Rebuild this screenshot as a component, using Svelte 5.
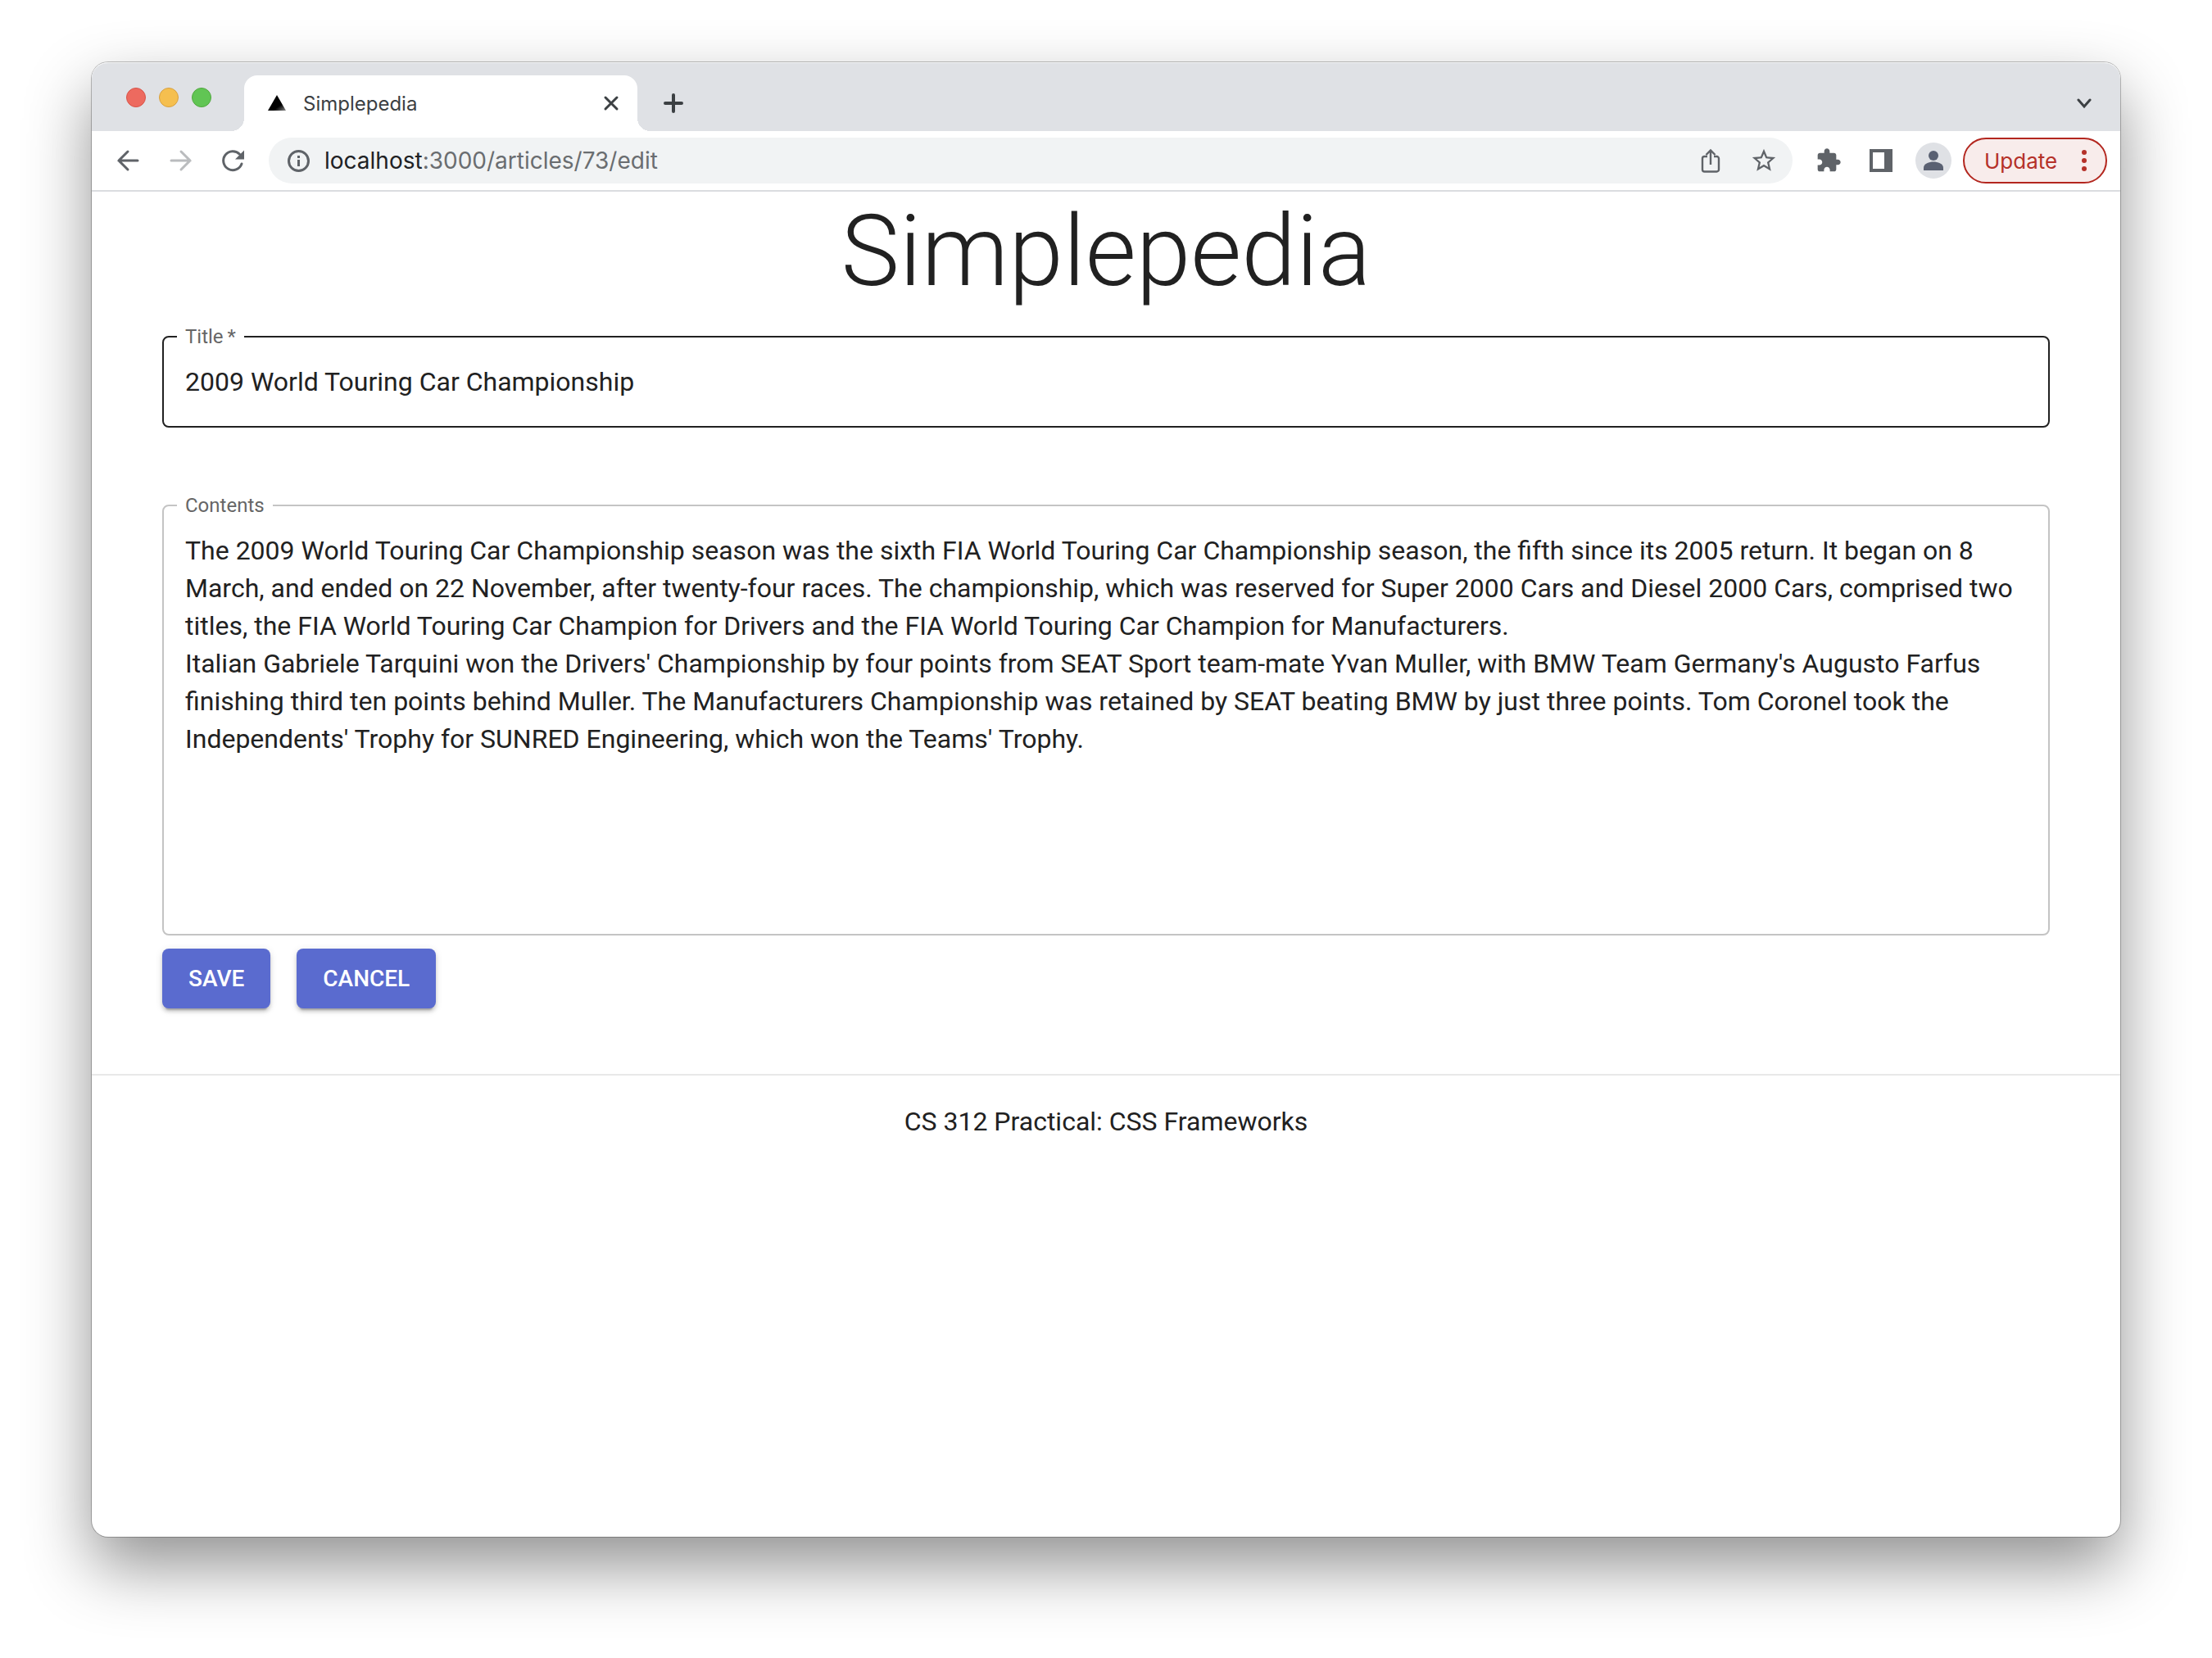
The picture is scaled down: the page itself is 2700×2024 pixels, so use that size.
<script lang="ts">
  const lights = ["close", "minimize", "zoom"];

  let title = $state("2009 World Touring Car Championship");
  let contents = $state(
    "The 2009 World Touring Car Championship season was the sixth FIA World Touring Car Championship season, the fifth since its 2005 return. It began on 8 March, and ended on 22 November, after twenty-four races. The championship, which was reserved for Super 2000 Cars and Diesel 2000 Cars, comprised two titles, the FIA World Touring Car Champion for Drivers and the FIA World Touring Car Champion for Manufacturers.\n" +
      "Italian Gabriele Tarquini won the Drivers' Championship by four points from SEAT Sport team-mate Yvan Muller, with BMW Team Germany's Augusto Farfus finishing third ten points behind Muller. The Manufacturers Championship was retained by SEAT beating BMW by just three points. Tom Coronel took the Independents' Trophy for SUNRED Engineering, which won the Teams' Trophy."
  );
</script>

<div class="desktop">
  <div class="window">
    <header class="tab-strip">
      <div class="lights">
        {#each lights as light (light)}
          <button type="button" class="light {light}" aria-label={light}></button>
        {/each}
      </div>
      <div class="tab">
        <svg class="favicon" viewBox="0 0 24 24" aria-hidden="true">
          <defs>
            <linearGradient id="tri" x1="0.5" y1="0.4" x2="1" y2="1">
              <stop offset="0.4" stop-color="#000" />
              <stop offset="1" stop-color="#888" />
            </linearGradient>
          </defs>
          <path d="M12 2 23 21H1z" fill="url(#tri)" />
        </svg>
        <span class="tab-title">Simplepedia</span>
        <button type="button" class="icon-btn" aria-label="Close tab">
          <svg width="24" height="24" viewBox="0 0 24 24">
            <path d="M5 5 19 19M19 5 5 19" fill="none" stroke="#3c4043" stroke-width="3" stroke-linecap="round" />
          </svg>
        </button>
      </div>
      <button type="button" class="icon-btn new-tab" aria-label="New tab">
        <svg width="24" height="24" viewBox="0 0 24 24">
          <path d="M12 2V22M2 12H22" fill="none" stroke="#3c4043" stroke-width="4" stroke-linecap="round" />
        </svg>
      </button>
      <button type="button" class="icon-btn tab-search" aria-label="Search tabs">
        <svg width="24" height="24" viewBox="0 0 24 24">
          <path d="m5 8 7 8 7-8" fill="none" stroke="#3c4043" stroke-width="3" stroke-linecap="round" />
        </svg>
      </button>
    </header>

    <nav class="toolbar">
      <div class="nav-buttons">
        <button type="button" class="icon-btn" aria-label="Back">
          <svg width="32" height="32" viewBox="0 0 32 32">
            <path d="M28 16H5M16 5 5 16 16 27" fill="none" stroke="#5f6368" stroke-width="3" stroke-linecap="round" />
          </svg>
        </button>
        <button type="button" class="icon-btn" aria-label="Forward">
          <svg width="32" height="32" viewBox="0 0 32 32">
            <path d="M5 16H28M17 5 28 16 17 27" fill="none" stroke="#babcbe" stroke-width="3" stroke-linecap="round" />
          </svg>
        </button>
        <button type="button" class="icon-btn" aria-label="Reload">
          <svg width="32" height="32" viewBox="0 0 32 32">
            <path d="M27 20A11.500 11.500 0 1 1 24.500 8.200" fill="none" stroke="#5f6368" stroke-width="3" stroke-linecap="round" />
            <path d="M30 3.500V14.500H19z" fill="#5f6368" />
          </svg>
        </button>
      </div>

      <div class="omnibox">
        <button type="button" class="icon-btn" aria-label="Site information">
          <svg width="28" height="28" viewBox="0 0 28 28">
            <circle cx="14.500" cy="14.500" r="12" fill="none" stroke="#5f6368" stroke-width="3" />
            <path d="M13 13h3V21h-3zM13 8h3v3h-3z" fill="#5f6368" />
          </svg>
        </button>
        <div class="url" role="textbox" tabindex="0" aria-label="Address">
          <span class="host">localhost</span>:3000/articles/73/edit
        </div>
        <button type="button" class="icon-btn" aria-label="Share">
          <svg width="32" height="32" viewBox="0 0 32 32">
            <path d="M12 11H8.500a2.500 2.500 0 0 0-2.500 2.500V27a2.500 2.500 0 0 0 2.500 2.500H23.500a2.500 2.500 0 0 0 2.500-2.500V13.500a2.500 2.500 0 0 0-2.500-2.500H20M16 21V4M10.500 9 16 3.500 21.500 9" fill="none" stroke="#5f6368" stroke-width="2.400" />
          </svg>
        </button>
        <button type="button" class="icon-btn" aria-label="Bookmark this page">
          <svg width="34" height="34" viewBox="0 0 24 24">
            <path fill="#5f6368" d="m22 9.240-7.190-.620L12 2 9.190 8.630 2 9.240l5.460 4.730L5.820 21 12 17.270 18.180 21l-1.630-7.030L22 9.240zM12 15.400l-3.760 2.270 1-4.280-3.320-2.880 4.380-.380L12 6.100l1.710 4.040 4.380.380-3.320 2.880 1 4.280L12 15.400z" />
          </svg>
        </button>
      </div>

      <div class="extras">
        <button type="button" class="icon-btn" aria-label="Extensions">
          <svg width="32" height="32" viewBox="0 0 24 24">
            <path fill="#5f6368" d="M20.500 11H19V7c0-1.100-.900-2-2-2h-4V3.500C13 2.120 11.880 1 10.500 1S8 2.120 8 3.500V5H4c-1.100 0-1.990.900-1.990 2v3.800H3.500c1.490 0 2.700 1.210 2.700 2.700s-1.210 2.700-2.700 2.700H2V20c0 1.100.900 2 2 2h3.800v-1.500c0-1.490 1.210-2.700 2.700-2.700 1.490 0 2.700 1.210 2.700 2.700V22H17c1.100 0 2-.900 2-2v-4h1.500c1.380 0 2.500-1.120 2.500-2.500S21.880 11 20.500 11z" />
          </svg>
        </button>
        <button type="button" class="icon-btn" aria-label="Side panel">
          <svg width="32" height="32" viewBox="0 0 32 32">
            <path fill="#5f6368" fill-rule="evenodd" d="M2 2H30V30H2zM6 6V26H20V6z" />
          </svg>
        </button>
        <button type="button" class="icon-btn avatar" aria-label="Profile">
          <svg width="44" height="44" viewBox="0 0 44 44">
            <circle cx="22" cy="16" r="6" fill="#5a6172" />
            <path d="M10 34V30.500C10 26 17 23.500 22 23.500S34 26 34 30.500V34z" fill="#5a6172" />
          </svg>
        </button>
      </div>
      <button type="button" class="update">
        Update
        <svg width="8" height="28" viewBox="0 0 8 28" aria-hidden="true">
          <circle cx="4" cy="4" r="3" />
          <circle cx="4" cy="14" r="3" />
          <circle cx="4" cy="24" r="3" />
        </svg>
      </button>
    </nav>

    <main>
      <h1>Simplepedia</h1>
      <form onsubmit={(e) => e.preventDefault()}>
        <fieldset class="hovered">
          <legend><label for="title">Title&thinsp;*</label></legend>
          <input id="title" type="text" bind:value={title} required />
        </fieldset>
        <fieldset>
          <legend><label for="contents">Contents</label></legend>
          <textarea id="contents" rows="10" spellcheck="false" bind:value={contents}></textarea>
        </fieldset>
        <div class="actions">
          <button type="submit" class="contained">Save</button>
          <button type="button" class="contained">Cancel</button>
        </div>
      </form>
    </main>
    <footer>CS 312 Practical: CSS Frameworks</footer>
  </div>
</div>

<style>
  :global(body) {
    background: #fff;
  }

  .desktop {
    box-sizing: border-box;
    min-height: 100vh;
    display: flex;
    padding: 76px 112px 148px;
    overflow: hidden;
    font-family: Roboto, sans-serif;
    color: #212121;
  }

  .window {
    flex: 1;
    min-width: 0;
    display: flex;
    flex-direction: column;
    background: #fff;
    border-radius: 20px;
    box-shadow: 0 0 0 1px rgba(0, 0, 0, 0.25), 0 36px 80px rgba(0, 0, 0, 0.43);
  }

  button {
    font-family: inherit;
    cursor: pointer;
  }

  .icon-btn {
    display: flex;
    padding: 0;
    border: 0;
    background: none;
  }

  /* tab strip */
  .tab-strip {
    display: flex;
    align-items: center;
    height: 84px;
    background: #dfe1e5;
    border-radius: 20px 20px 0 0;
    box-shadow: inset 0 1px #f4f5f6;
  }

  .lights {
    display: flex;
    gap: 16px;
    padding: 2px 40px 0 42px;
  }

  .light {
    box-sizing: border-box;
    width: 24px;
    height: 24px;
    padding: 0;
    border: 1px solid #d85449;
    border-radius: 50%;
    background: #ed6a5f;
  }
  .light.minimize {
    border-color: #d8a040;
    background: #f5bf4f;
  }
  .light.zoom {
    border-color: #51a83f;
    background: #61c554;
  }

  .tab {
    position: relative;
    align-self: flex-end;
    box-sizing: border-box;
    display: flex;
    align-items: center;
    width: 480px;
    height: 68px;
    padding: 0 20px 0 28px;
    background: #fff;
    border-radius: 16px 16px 0 0;
  }
  /* flared bottom corners */
  .tab::before,
  .tab::after {
    content: "";
    position: absolute;
    bottom: 0;
    width: 16px;
    height: 16px;
  }
  .tab::before {
    right: 100%;
    background: radial-gradient(circle at 0 0, transparent 16px, #fff 16px);
  }
  .tab::after {
    left: 100%;
    background: radial-gradient(circle at 100% 0, transparent 16px, #fff 16px);
  }

  .favicon {
    width: 24px;
    height: 24px;
  }

  .tab-title {
    flex: 1;
    padding-left: 20px;
    font: 24px Inter, sans-serif;
    color: #3c4043;
  }

  .new-tab {
    margin: 16px 0 0 32px;
  }

  .tab-search {
    margin: 16px 32px 0 auto;
  }

  /* toolbar */
  .toolbar {
    display: flex;
    align-items: center;
    height: 72px;
    padding: 0 16px 0 28px;
    border-bottom: 2px solid #dadce0;
  }

  .nav-buttons {
    display: flex;
    gap: 32px;
    margin-right: 28px;
  }

  .omnibox {
    flex: 1;
    display: flex;
    align-items: center;
    height: 56px;
    padding: 0 18px 0 22px;
    border-radius: 28px;
    background: #f1f3f4;
  }
  .omnibox .icon-btn + .icon-btn {
    margin-left: 32px;
  }

  .url {
    flex: 1;
    padding-left: 18px;
    font: 28px Inter, sans-serif;
    color: #6a6d70;
  }
  .host {
    color: #202124;
  }

  .extras {
    display: flex;
    align-items: center;
    gap: 32px;
    margin: 0 14px 0 28px;
  }

  .avatar {
    margin-left: -6px;
    border-radius: 50%;
    background: #dfe1e5;
  }

  .update {
    box-sizing: border-box;
    display: flex;
    align-items: center;
    justify-content: space-between;
    width: 176px;
    height: 56px;
    padding: 0 22px 0 24px;
    border: 2px solid #b3261e;
    border-radius: 28px;
    background: #f8eceb;
    color: #b53129;
    font: 26px Inter, sans-serif;
  }
  .update svg {
    fill: #b53129;
  }

  /* page */
  main {
    padding: 0 86px;
  }

  h1 {
    margin: 0;
    font-size: 120px;
    font-weight: 300;
    line-height: 146px;
    text-align: center;
  }

  form {
    padding-top: 20px;
  }

  fieldset {
    min-width: 0;
    margin: 0 0 84px;
    padding: 0 16px;
    border: 2px solid #c4c4c4;
    border-radius: 8px;
  }
  fieldset.hovered {
    border-color: #212121;
  }
  fieldset:last-of-type {
    margin-bottom: 16px;
  }

  legend {
    padding: 0 10px;
    font-size: 24px;
    line-height: 22px;
    color: #666;
  }

  legend label {
    display: block;
  }

  input,
  textarea {
    display: block;
    box-sizing: border-box;
    width: 100%;
    margin: 0;
    padding: 21px 10px 31px;
    border: 0;
    outline: 0;
    background: none;
    color: inherit;
    font: 32px/46px Roboto, sans-serif;
    resize: none;
  }

  .actions {
    display: flex;
    gap: 32px;
  }

  .contained {
    padding: 12px 32px;
    border: 0;
    border-radius: 8px;
    background: #5a6bcf;
    box-shadow: 0 6px 2px -4px rgba(0, 0, 0, 0.2), 0 4px 4px rgba(0, 0, 0, 0.14), 0 2px 10px rgba(0, 0, 0, 0.12);
    color: #fff;
    font-size: 28px;
    font-weight: 500;
    line-height: 49px;
    text-transform: uppercase;
  }

  footer {
    margin-top: 80px;
    padding: 32px 0;
    border-top: 2px solid #e8e8e8;
    font-size: 32px;
    line-height: 48px;
    text-align: center;
  }
</style>
